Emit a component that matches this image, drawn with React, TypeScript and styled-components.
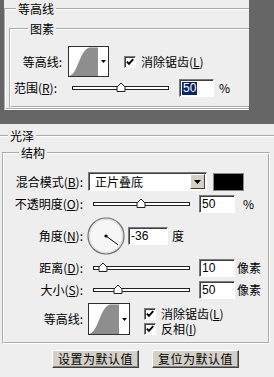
import React from "react";
import styled, { createGlobalStyle } from "styled-components";

const GlobalStyle = createGlobalStyle`
  html, body { margin: 0; padding: 0; background: #666666; }
  body {
    font-family: "Noto Sans CJK SC", "Liberation Sans", sans-serif;
    font-size: 12px;
    color: #000;
  }
`;

const Screen = styled.div`
  width: 274px;
  height: 377px;
  display: flex;
  flex-direction: column;
  gap: 14px;
  background: #666666;
  overflow: hidden;
`;

const TopPanel = styled.div`
  margin-left: 4px;
  width: 245px;
  height: 110px;
  flex-shrink: 0;
  background: #eeeeee;
  overflow: hidden;
`;

const BottomPanel = styled.div`
  flex: 1;
  background: #eeeeee;
  display: flex;
  flex-direction: column;
  overflow: hidden;
`;

// etched group box, the way windows draws it
const Group = styled.fieldset<{ $mt: number; $ml: number; $mr: number; $pad?: string; $topOnly?: boolean }>`
  margin: ${(p) => p.$mt}px ${(p) => p.$mr}px 0 ${(p) => p.$ml}px;
  padding: ${(p) => p.$pad || "0"};
  min-width: 0;
  border: ${(p) => (p.$topOnly ? "0" : "2px groove #ffffff")};
  border-top: 2px groove #ffffff;
`;

const Legend = styled.legend<{ $ml: number }>`
  margin-left: ${(p) => p.$ml}px;
  padding: 0 2px;
  font-size: 12px;
  line-height: 12px;
  height: 12px;
`;

const Rows = styled.div<{ $gap: number }>`
  display: flex;
  flex-direction: column;
  gap: ${(p) => p.$gap}px;
`;

const Row = styled.div<{ $h: number }>`
  display: flex;
  align-items: center;
  height: ${(p) => p.$h}px;
`;

const Label = styled.span<{ $w: number }>`
  width: ${(p) => p.$w}px;
  flex-shrink: 0;
  text-align: right;
  white-space: nowrap;
  line-height: 12px;
`;

const Text = styled.span<{ $ml: number }>`
  display: inline-block;
  margin-left: ${(p) => p.$ml}px;
  height: 12px;
  white-space: nowrap;
  line-height: 12px;
`;

const Field = styled.div<{ $w: number; $ml: number }>`
  width: ${(p) => p.$w}px;
  height: 18px;
  margin-left: ${(p) => p.$ml}px;
  flex-shrink: 0;
  box-sizing: border-box;
  display: flex;
  align-items: center;
  padding-left: 2px;
  background: #fff;
  border: 1px solid;
  border-color: #7a7a7a #ffffff #ffffff #7a7a7a;
  box-shadow: inset 1px 1px 0 #404040;
  font-family: "Liberation Sans", sans-serif;
  font-size: 12px;
`;

const Selected = styled.span`
  background: #0a246a;
  color: #fff;
  padding: 0 1px;
  line-height: 13px;
`;

const Select = styled.div<{ $w: number; $ml: number }>`
  width: ${(p) => p.$w}px;
  height: 19px;
  margin-left: ${(p) => p.$ml}px;
  box-sizing: border-box;
  display: flex;
  align-items: stretch;
  background: #fff;
  border: 1px solid;
  border-color: #7a7a7a #ffffff #ffffff #7a7a7a;
  box-shadow: inset 1px 1px 0 #404040;
`;

const SelectText = styled.span`
  flex: 1;
  padding: 1px 0 0 6px;
  line-height: 15px;
`;

const DropButton = styled.div`
  width: 15px;
  margin: 1px 1px 1px 0;
  box-sizing: border-box;
  background: #d4d0c8;
  border: 1px solid;
  border-color: #ffffff #404040 #404040 #ffffff;
  display: flex;
  align-items: center;
  justify-content: center;
`;

const Swatch = styled.div<{ $ml: number }>`
  width: 31px;
  height: 18px;
  margin-left: ${(p) => p.$ml}px;
  box-sizing: border-box;
  background: #000;
  border: 1px solid #8a8a8a;
`;

const Track = styled.div<{ $w: number; $ml: number }>`
  position: relative;
  width: ${(p) => p.$w}px;
  height: 4px;
  margin-left: ${(p) => p.$ml}px;
  flex-shrink: 0;
  box-sizing: border-box;
  background: #fff;
  border: 1px solid #222;
`;

const Thumb = styled.svg<{ $pos: number }>`
  position: absolute;
  top: -5px;
  left: calc(${(p) => p.$pos}% - 5px);
`;

const CurveFrame = styled.div<{ $w: number; $h: number; $ml: number }>`
  width: ${(p) => p.$w}px;
  height: ${(p) => p.$h}px;
  margin-left: ${(p) => p.$ml}px;
  flex-shrink: 0;
  box-sizing: border-box;
  display: flex;
  background: #fff;
  border: 1px solid #303030;
`;

const CurveArrow = styled.div`
  width: 10px;
  display: flex;
  align-items: center;
  justify-content: center;
`;

const Check = styled.span<{ $ml: number }>`
  width: 12px;
  height: 12px;
  margin-left: ${(p) => p.$ml}px;
  flex-shrink: 0;
  box-sizing: border-box;
  background: #fff;
  border: 1px solid;
  border-color: #7a7a7a #ffffff #ffffff #7a7a7a;
  box-shadow: inset 1px 1px 0 #404040;
  display: flex;
  align-items: center;
  justify-content: center;
`;

const CheckList = styled.div<{ $ml: number }>`
  align-self: flex-start;
  margin: 5px 0 0 ${(p) => p.$ml}px;
  display: flex;
  flex-direction: column;
  gap: 3px;
`;

const CheckRow = styled.div`
  display: flex;
  align-items: center;
  height: 12px;
`;

const Dial = styled.svg<{ $ml: number }>`
  margin-left: ${(p) => p.$ml}px;
  flex-shrink: 0;
`;

const ButtonBar = styled.div`
  display: flex;
  gap: 13px;
  padding-left: 52px;
  margin-top: 6px;
`;

const Button = styled.div`
  width: 87px;
  height: 18px;
  box-sizing: border-box;
  background: #d4d0c8;
  border: 1px solid;
  border-color: #ffffff #404040 #404040 #ffffff;
  box-shadow: inset -1px -1px 0 #808080;
  display: flex;
  align-items: center;
  justify-content: center;
  line-height: 12px;
  letter-spacing: 0.5px;
`;

const Arrow = () => (
  <svg width="7" height="4" viewBox="0 0 7 4">
    <path d="M0 0H7L3.5 4Z" fill="#000" />
  </svg>
);

const CheckBox = ({ ml }: { ml: number }) => (
  <Check $ml={ml}>
    <svg width="8" height="8" viewBox="0 0 8 8">
      <path d="M0.8 3.6 L3 5.8 L7.2 1.2" stroke="#000" strokeWidth="1.9" fill="none" />
    </svg>
  </Check>
);

const Slider = ({ w, ml, pos }: { w: number; ml: number; pos: number }) => (
  <Track $w={w} $ml={ml}>
    <Thumb $pos={pos} width="10" height="10" viewBox="0 0 10 10">
      <path d="M1 9.5V5L5 1L9 5V9.5Z" fill="#fff" stroke="#222" strokeWidth="1" />
    </Thumb>
  </Track>
);

const Contour = ({ w, h, ml }: { w: number; h: number; ml: number }) => (
  <CurveFrame $w={w} $h={h} $ml={ml}>
    <svg width={w - 12} height={h - 2} viewBox="0 0 30 30" preserveAspectRatio="none">
      <path d="M0 30 C9 29 11 3 21 0.5 L30 0.5 L30 30Z" fill="#8e8e8e" />
    </svg>
    <CurveArrow>
      <svg width="5" height="3" viewBox="0 0 5 3">
        <path d="M0 0H5L2.5 3Z" fill="#000" />
      </svg>
    </CurveArrow>
  </CurveFrame>
);

const angle = (-36 * Math.PI) / 180;

export default function App() {
  return (
    <>
      <GlobalStyle />
      <Screen>
        <TopPanel>
          <Group $mt={3} $ml={0} $mr={-30}>
            <Legend $ml={10}>等高线</Legend>
            <Group $mt={8} $ml={3} $mr={0} $pad="11px 0 9px 0">
              <Legend $ml={17}>图素</Legend>
              <Rows $gap={2}>
                <Row $h={31}>
                  <Label $w={51}>等高线:</Label>
                  <Contour w={41} h={31} ml={6} />
                  <CheckBox ml={15} />
                  <Text $ml={5}>消除锯齿(<u>L</u>)</Text>
                </Row>
                <Row $h={18}>
                  <Label $w={46}>范围(<u>R</u>):</Label>
                  <Slider w={97} ml={15} pos={51} />
                  <Field $w={35} $ml={10}>
                    <Selected>50</Selected>
                  </Field>
                  <Text $ml={5}>%</Text>
                </Row>
              </Rows>
            </Group>
          </Group>
        </TopPanel>

        <BottomPanel>
          <Group $mt={6} $ml={0} $mr={0} $topOnly>
            <Legend $ml={8}>光泽</Legend>
            <Group $mt={5} $ml={2} $mr={4} $pad="13px 0 7px 0">
              <Legend $ml={15}>结构</Legend>
              <Rows $gap={3}>
                <Row $h={19}>
                  <Label $w={79}>混合模式(<u>B</u>):</Label>
                  <Select $w={119} $ml={5}>
                    <SelectText>正片叠底</SelectText>
                    <DropButton>
                      <Arrow />
                    </DropButton>
                  </Select>
                  <Swatch $ml={6} />
                </Row>
                <Row $h={20}>
                  <Label $w={79}>不透明度(<u>O</u>):</Label>
                  <Slider w={97} ml={10} pos={49} />
                  <Field $w={36} $ml={9}>50</Field>
                  <Text $ml={8}>%</Text>
                </Row>
                <Row $h={38}>
                  <Label $w={79}>角度(<u>N</u>):</Label>
                  <Dial $ml={4} width="38" height="38" viewBox="0 0 38 38">
                    <circle cx="19" cy="19" r="18" fill="#f6f6f6" stroke="#6e6e6e" strokeWidth="1.2" />
                    <circle cx="19" cy="19" r="16.6" fill="none" stroke="#d8d8d8" strokeWidth="1" />
                    <line
                      x1="19"
                      y1="19"
                      x2={19 + 15 * Math.cos(angle)}
                      y2={19 - 15 * Math.sin(angle)}
                      stroke="#000"
                      strokeWidth="1"
                    />
                    <circle cx="19" cy="19" r="1.6" fill="#000" />
                  </Dial>
                  <Field $w={40} $ml={3}>-36</Field>
                  <Text $ml={4}>度</Text>
                </Row>
                <Row $h={19}>
                  <Label $w={79}>距离(<u>D</u>):</Label>
                  <Slider w={97} ml={10} pos={9} />
                  <Field $w={36} $ml={9}>10</Field>
                  <Text $ml={2}>像素</Text>
                </Row>
                <Row $h={20}>
                  <Label $w={79}>大小(<u>S</u>):</Label>
                  <Slider w={97} ml={10} pos={25} />
                  <Field $w={36} $ml={9}>50</Field>
                  <Text $ml={2}>像素</Text>
                </Row>
                <Row $h={32}>
                  <Label $w={79}>等高线:</Label>
                  <Contour w={42} h={32} ml={5} />
                  <CheckList $ml={14}>
                    <CheckRow>
                      <CheckBox ml={0} />
                      <Text $ml={5}>消除锯齿(<u>L</u>)</Text>
                    </CheckRow>
                    <CheckRow>
                      <CheckBox ml={0} />
                      <Text $ml={5}>反相(<u>I</u>)</Text>
                    </CheckRow>
                  </CheckList>
                </Row>
              </Rows>
            </Group>
          </Group>
          <ButtonBar>
            <Button>设置为默认值</Button>
            <Button>复位为默认值</Button>
          </ButtonBar>
        </BottomPanel>
      </Screen>
    </>
  );
}
